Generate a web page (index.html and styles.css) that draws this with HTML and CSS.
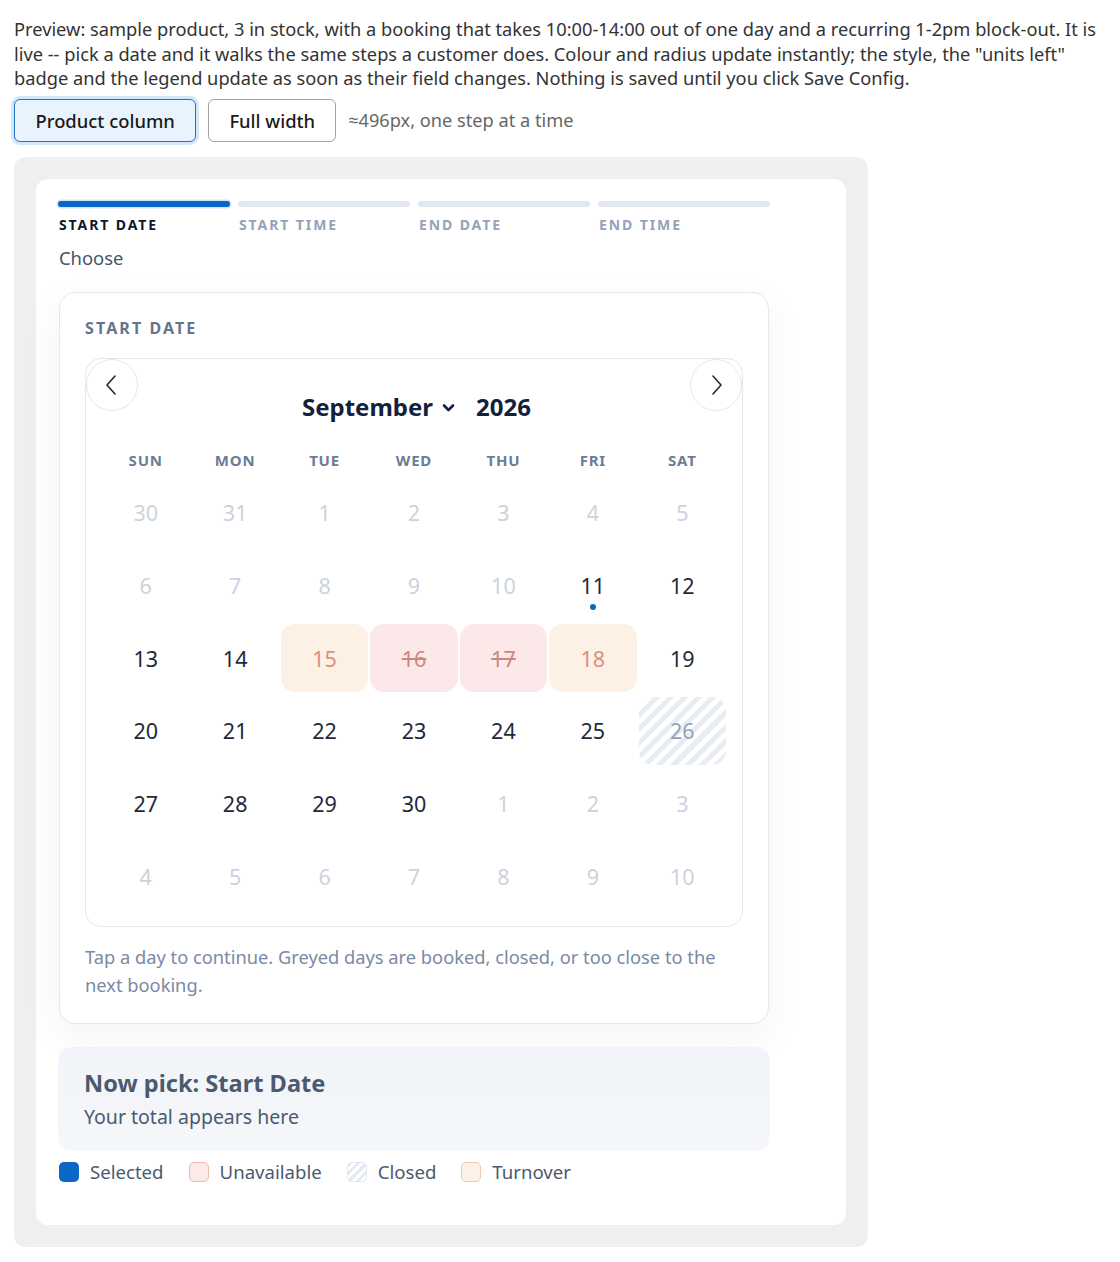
FILE: index.html
```html
<!DOCTYPE html>
<html lang="en">
<head>
<meta charset="utf-8">
<title>Booking preview</title>
<link rel="stylesheet" href="styles.css">
</head>
<body>
<p class="intro">Preview: sample product, 3 in stock, with a booking that takes 10:00-14:00 out of one day and a recurring 1-2pm block-out. It is live -- pick a date and it walks the same steps a customer does. Colour and radius update instantly; the style, the "units left" badge and the legend update as soon as their field changes. Nothing is saved until you click Save Config.</p>
<div class="toolbar">
  <button class="tbtn active">Product column</button>
  <button class="tbtn">Full width</button>
  <span class="hint">≈496px, one step at a time</span>
</div>
<div class="frame">
  <div class="card">
    <div class="col">
      <div class="steps">
        <div class="step on"><div class="bar"></div><div class="slabel">Start Date</div></div>
        <div class="step"><div class="bar"></div><div class="slabel">Start Time</div></div>
        <div class="step"><div class="bar"></div><div class="slabel">End Date</div></div>
        <div class="step"><div class="bar"></div><div class="slabel">End Time</div></div>
      </div>
      <div class="choose">Choose</div>
      <div class="panel">
        <div class="plabel">Start Date</div>
        <div class="cal">
          <button class="nav prev" aria-label="Previous month"><svg width="14" height="22" viewBox="0 0 14 22"><path d="M10 2 L2 11 L10 20" fill="none" stroke="#1e293b" stroke-width="1.6" stroke-linecap="round" stroke-linejoin="round"/></svg></button>
          <button class="nav next" aria-label="Next month"><svg width="14" height="22" viewBox="0 0 14 22"><path d="M4 2 L12 11 L4 20" fill="none" stroke="#1e293b" stroke-width="1.6" stroke-linecap="round" stroke-linejoin="round"/></svg></button>
          <div class="title">
            <span class="month">September</span>
            <svg class="chev" width="15" height="10" viewBox="0 0 15 10"><path d="M3 2.5 L7.5 7 L12 2.5" fill="none" stroke="#14213d" stroke-width="2.6" stroke-linecap="round" stroke-linejoin="round"/></svg>
            <span class="year">2026</span>
          </div>
          <div class="wk">
            <span>Sun</span><span>Mon</span><span>Tue</span><span>Wed</span><span>Thu</span><span>Fri</span><span>Sat</span>
          </div>
          <div class="days">
            <span class="d mute">30</span><span class="d mute">31</span><span class="d mute">1</span><span class="d mute">2</span><span class="d mute">3</span><span class="d mute">4</span><span class="d mute">5</span>
            <span class="d mute">6</span><span class="d mute">7</span><span class="d mute">8</span><span class="d mute">9</span><span class="d mute">10</span><span class="d today">11<i class="dot"></i></span><span class="d">12</span>
            <span class="d">13</span><span class="d">14</span><span class="d turn">15</span><span class="d unav">16</span><span class="d unav">17</span><span class="d turn">18</span><span class="d">19</span>
            <span class="d">20</span><span class="d">21</span><span class="d">22</span><span class="d">23</span><span class="d">24</span><span class="d">25</span><span class="d closed">26</span>
            <span class="d">27</span><span class="d">28</span><span class="d">29</span><span class="d">30</span><span class="d mute">1</span><span class="d mute">2</span><span class="d mute">3</span>
            <span class="d mute">4</span><span class="d mute">5</span><span class="d mute">6</span><span class="d mute">7</span><span class="d mute">8</span><span class="d mute">9</span><span class="d mute">10</span>
          </div>
        </div>
        <p class="help">Tap a day to continue. Greyed days are booked, closed, or too close to the next booking.</p>
      </div>
      <div class="summary">
        <div class="stitle">Now pick: Start Date</div>
        <div class="ssub">Your total appears here</div>
      </div>
      <div class="legend">
        <span class="li"><i class="sw sw-sel"></i>Selected</span>
        <span class="li"><i class="sw sw-unav"></i>Unavailable</span>
        <span class="li"><i class="sw sw-closed"></i>Closed</span>
        <span class="li"><i class="sw sw-turn"></i>Turnover</span>
      </div>
    </div>
  </div>
</div>
</body>
</html>
```

FILE: styles.css
```css
* { box-sizing: border-box; }
html, body { background: #fff; }
body {
  margin: 0;
  padding: 17px 14px 0;
  font-family: "Noto Sans", "Open Sans", sans-serif;
  color: #333;
}
.intro {
  margin: 0;
  font-size: 18.25px;
  line-height: 24.5px;
  color: #333;
}
.toolbar {
  display: flex;
  align-items: center;
  gap: 12px;
  margin-top: 8px;
}
.tbtn {
  height: 43px;
  padding: 0 20px;
  font-family: inherit;
  font-size: 18.4px;
  font-weight: 500;
  color: #1a1a1a;
  background: #fff;
  border: 1px solid #a3a3a3;
  border-radius: 6px;
}
.tbtn.active {
  padding: 0 20.5px;
  background: #e8f3fd;
  border: 1.5px solid #1f74c9;
  box-shadow: 0 0 0 3px #d2e7fa;
}
.hint {
  font-size: 18.2px;
  color: #666;
}
.frame {
  width: 854px;
  margin-top: 15px;
  padding: 22px;
  background: #efefef;
  border-radius: 12px;
}
.card {
  background: #fff;
  border-radius: 12px;
  padding: 22px 22px 42px;
}
.col { width: 712px; }
.steps {
  display: grid;
  grid-template-columns: repeat(4, 1fr);
  gap: 8px;
}
.bar {
  height: 6px;
  border-radius: 3px;
  background: #e2e8f0;
}
.step.on .bar {
  background: #0b67c4;
  box-shadow: 0 0 0 1.5px #cfe3f7;
}
.slabel {
  margin-top: 8px;
  padding-left: 1px;
  font-size: 14px;
  line-height: 20px;
  font-weight: 700;
  letter-spacing: 1.9px;
  text-transform: uppercase;
  color: #94a3b8;
}
.step.on .slabel { color: #0f172a; }
.choose {
  margin-top: 11px;
  padding-left: 1px;
  font-size: 18.4px;
  line-height: 24px;
  color: #475569;
}
.panel {
  width: 710px;
  margin: 22px 0 0 1px;
  padding: 25px 25px 24px;
  background: #fff;
  border: 1px solid #e3e8ef;
  border-radius: 16px;
  box-shadow: 0 12px 40px rgba(15, 23, 42, 0.05);
}
.plabel {
  font-size: 16px;
  line-height: 20px;
  font-weight: 700;
  letter-spacing: 2.1px;
  text-transform: uppercase;
  color: #64748b;
}
.cal {
  position: relative;
  margin-top: 20px;
  padding: 32px 16px 16px;
  border: 1px solid #e2e8f0;
  border-radius: 16px;
}
.nav {
  position: absolute;
  top: 0;
  width: 52px;
  height: 52px;
  padding: 0;
  display: flex;
  align-items: center;
  justify-content: center;
  background: #fff;
  border: 1px solid #e2e8f0;
  border-radius: 50%;
}
.nav.prev { left: 0; }
.nav.next { right: 0; }
.title {
  display: flex;
  align-items: center;
  justify-content: center;
  height: 32px;
  padding-left: 5px;
  font-size: 24px;
  font-weight: 700;
  color: #14213d;
}
.chev { margin: 2px 20px 0 8px; }
.wk {
  display: grid;
  grid-template-columns: repeat(7, 1fr);
  column-gap: 2px;
  margin-top: 25px;
  font-size: 15px;
  line-height: 24px;
  font-weight: 700;
  letter-spacing: 0.8px;
  text-transform: uppercase;
  text-align: center;
  color: #6b7d96;
}
.days {
  display: grid;
  grid-template-columns: repeat(7, 1fr);
  grid-auto-rows: 68px;
  column-gap: 2px;
  row-gap: 4.8px;
  margin-top: 7px;
}
.d {
  position: relative;
  display: flex;
  align-items: center;
  justify-content: center;
  font-size: 21.5px;
  color: #1e293b;
  border-radius: 14px;
}
.d.mute { color: #cbd3de; }
.d.turn { background: #fdf1e6; color: #d8917c; }
.d.unav { background: #fce8e8; color: #cc877c; text-decoration: line-through; }
.d.closed {
  color: #94a3b8;
  background: repeating-linear-gradient(135deg, #e8ecf3 0 5px, #fff 5px 10px);
}
.dot {
  position: absolute;
  left: 50%;
  bottom: 9px;
  width: 6px;
  height: 6px;
  margin-left: -3px;
  border-radius: 50%;
  background: #0b67c4;
}
.help {
  margin: 16px 0 0;
  font-size: 18.3px;
  line-height: 28px;
  color: #7a8aa3;
}
.summary {
  margin-top: 23px;
  padding: 21px 26px 20px;
  border-radius: 14px;
  background: linear-gradient(180deg, #f1f4f8, #f5f7fa);
}
.stitle {
  font-size: 23.6px;
  line-height: 30px;
  font-weight: 700;
  color: #4b5a70;
}
.ssub {
  margin-top: 5px;
  font-size: 19.5px;
  line-height: 28px;
  color: #4b5a70;
}
.legend {
  display: flex;
  align-items: center;
  gap: 25px;
  margin-top: 10px;
  padding-left: 1px;
  font-size: 18.6px;
  line-height: 22px;
  color: #4b5a70;
}
.li { display: flex; align-items: center; gap: 11px; }
.sw {
  display: inline-block;
  width: 20px;
  height: 20px;
  border-radius: 5px;
}
.sw-sel { background: #0b67c4; }
.sw-unav { background: #fde9e8; border: 1px solid #f2bcaa; }
.sw-closed { background: repeating-linear-gradient(135deg, #e6eaf2 0 3px, #fff 3px 6px); border: 1px solid #e2e8f0; }
.sw-turn { background: #fdf1e6; border: 1px solid #f4c8a8; }
```
